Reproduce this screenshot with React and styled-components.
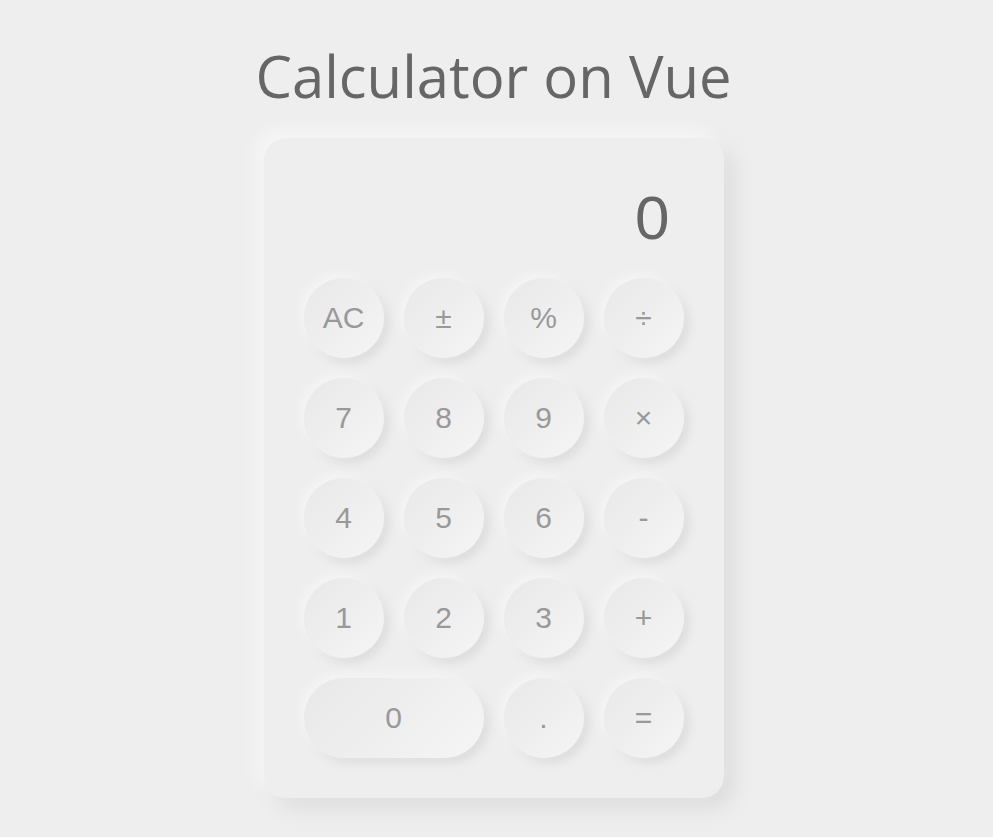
import React from 'react'
import styled, { createGlobalStyle } from 'styled-components'

const GlobalStyle = createGlobalStyle`
    body {
        margin: 0;
        background: #eeeeee;
        font-family: "Liberation Sans", Arial, sans-serif;
    }
`

const keys = [
    { label: 'AC' }, { label: '±' }, { label: '%' }, { label: '÷' },
    { label: '7' }, { label: '8' }, { label: '9' }, { label: '×' },
    { label: '4' }, { label: '5' }, { label: '6' }, { label: '-' },
    { label: '1' }, { label: '2' }, { label: '3' }, { label: '+' },
    { label: '0', wide: true }, { label: '.' }, { label: '=' },
]

const App = () => {
    return (
        <Page>
            <GlobalStyle />
            <Title>Calculator on Vue</Title>
            <Calculator>
                <Display>0</Display>
                <Keys>
                    {keys.map((k) => (
                        <Key key={k.label} $wide={k.wide}>{k.label}</Key>
                    ))}
                </Keys>
            </Calculator>
        </Page>
    )
}

export default App

const Page = styled.div`
    display: flex;
    flex-direction: column;
    align-items: center;
    min-height: 837px;
    padding-right: 6px;
    box-sizing: border-box;
`

const Title = styled.h1`
    margin: 36px 0 22px;
    font-family: "Open Sans", "Noto Sans", sans-serif;
    font-size: 58px;
    font-weight: 400;
    line-height: 80px;
    color: #666666;
`

const Calculator = styled.div`
    width: 460px;
    box-sizing: border-box;
    padding: 40px;
    border-radius: 22px;
    background: #eeeeee;
    box-shadow: -8px -8px 16px #f6f6f6, 10px 10px 20px #dcdcdc;
`

const Display = styled.div`
    height: 80px;
    margin-bottom: 20px;
    padding-right: 14px;
    text-align: right;
    font-size: 62px;
    line-height: 80px;
    color: #666666;
`

const Keys = styled.div`
    display: grid;
    grid-template-columns: repeat(4, 80px);
    grid-auto-rows: 80px;
    gap: 20px;
`

const Key = styled.button`
    grid-column: ${(p) => (p.$wide ? 'span 2' : 'span 1')};
    border: none;
    border-radius: 40px;
    padding: 0;
    background: linear-gradient(135deg, #e8e8e8, #f5f5f5);
    box-shadow: -4px -4px 10px #f5f5f5, 5px 5px 10px #dcdcdc;
    font-family: "Liberation Sans", Arial, sans-serif;
    font-size: 30px;
    color: #999999;
    cursor: pointer;
    outline: none;
`
